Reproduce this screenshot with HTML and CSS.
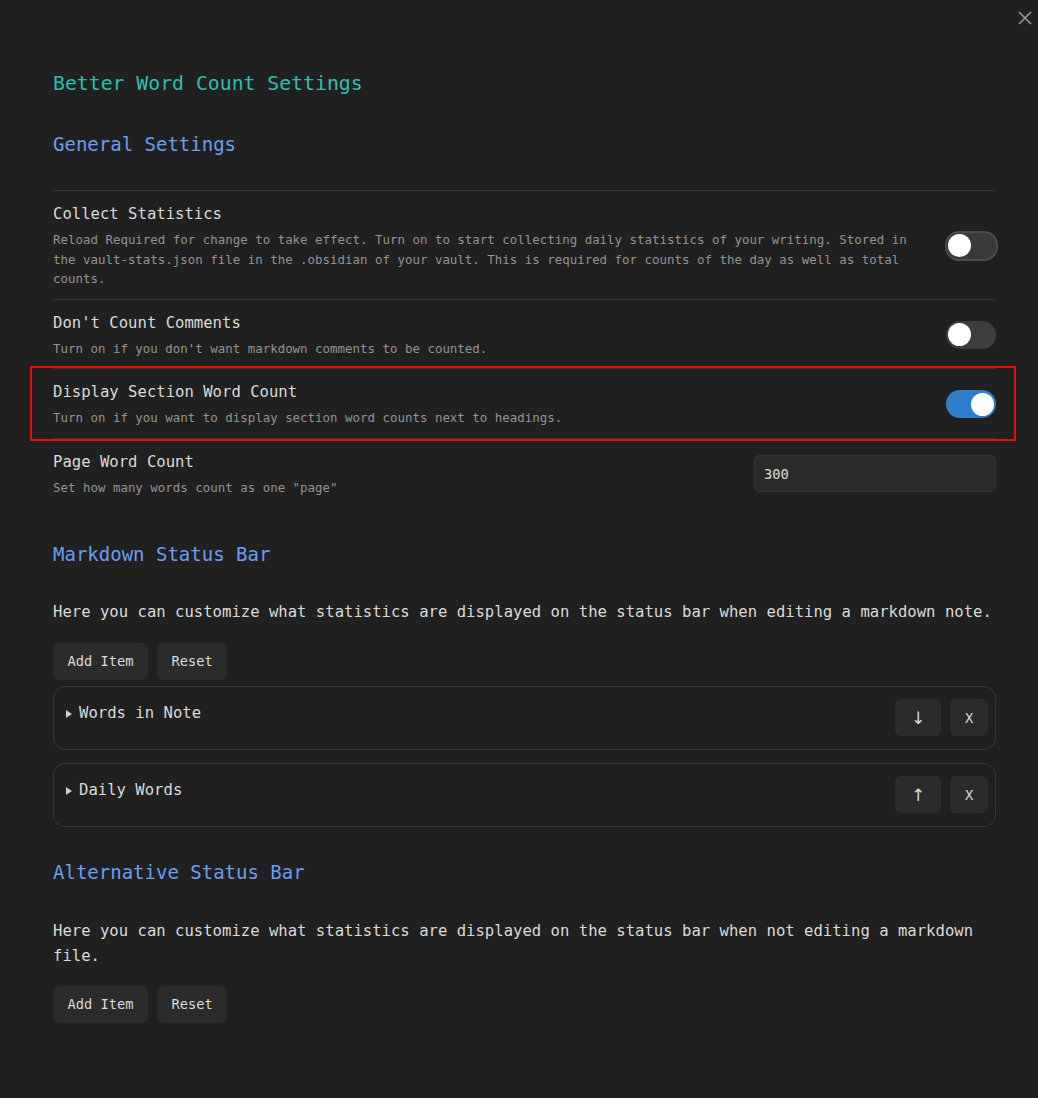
FILE: index.html
```html
<!DOCTYPE html>
<html>
<head>
<meta charset="utf-8">
<link rel="stylesheet" href="styles.css">
</head>
<body>
<div class="modal">
  <div class="close">
    <svg width="16" height="16" viewBox="0 0 16 16"><path d="M2 2 L14 14 M14 2 L2 14" stroke="#9a9a9a" stroke-width="1.6" fill="none"/></svg>
  </div>
  <div class="content">
    <h1 class="title">Better Word Count Settings</h1>
    <h2 class="heading first">General Settings</h2>

    <div class="setting">
      <div class="info">
        <div class="name">Collect Statistics</div>
        <div class="desc">Reload Required for change to take effect. Turn on to start collecting daily statistics of your writing. Stored in the vault-stats.json file in the .obsidian of your vault. This is required for counts of the day as well as total counts.</div>
      </div>
      <div class="toggle focused"><span class="knob"></span></div>
    </div>

    <div class="setting">
      <div class="info">
        <div class="name">Don't Count Comments</div>
        <div class="desc">Turn on if you don't want markdown comments to be counted.</div>
      </div>
      <div class="toggle"><span class="knob"></span></div>
    </div>

    <div class="setting highlighted">
      <div class="info">
        <div class="name">Display Section Word Count</div>
        <div class="desc">Turn on if you want to display section word counts next to headings.</div>
      </div>
      <div class="toggle on"><span class="knob"></span></div>
    </div>

    <div class="setting">
      <div class="info">
        <div class="name">Page Word Count</div>
        <div class="desc">Set how many words count as one "page"</div>
      </div>
      <input class="text-input" type="text" value="300">
    </div>

    <h2 class="heading">Markdown Status Bar</h2>
    <p class="para">Here you can customize what statistics are displayed on the status bar when editing a markdown note.</p>
    <div class="btn-row">
      <button class="btn">Add Item</button>
      <button class="btn">Reset</button>
    </div>
    <div class="item">
      <div class="summary"><span class="tri"></span>Words in Note</div>
      <div class="item-btns">
        <button class="btn small arrow">↓</button>
        <button class="btn small">X</button>
      </div>
    </div>
    <div class="item">
      <div class="summary"><span class="tri"></span>Daily Words</div>
      <div class="item-btns">
        <button class="btn small arrow">↑</button>
        <button class="btn small">X</button>
      </div>
    </div>

    <h2 class="heading alt">Alternative Status Bar</h2>
    <p class="para alt-para">Here you can customize what statistics are displayed on the status bar when not editing a markdown file.</p>
    <div class="btn-row last">
      <button class="btn">Add Item</button>
      <button class="btn">Reset</button>
    </div>
  </div>
</div>
</body>
</html>
```
FILE: styles.css
```css
html, body {
  margin: 0;
  padding: 0;
  background: #202020;
}
body {
  font-family: "DejaVu Sans Mono", "Liberation Mono", monospace;
  color: #dadada;
  width: 1038px;
  height: 1098px;
  overflow: hidden;
}
.modal {
  position: relative;
  height: 1098px;
}
.close {
  position: absolute;
  top: 10px;
  right: 5px;
  width: 16px;
  height: 16px;
}
.content {
  padding: 72px 42px 0 53px;
}
.title {
  margin: 0;
  font-size: 19.8px;
  line-height: 24px;
  font-weight: normal;
  color: #2fbdb3;
}
.heading {
  margin: 0;
  font-size: 19px;
  line-height: 24px;
  font-weight: normal;
  color: #6a9ef0;
}
.heading.first {
  margin-top: 36px;
  margin-bottom: 34px;
}
.setting {
  position: relative;
  display: flex;
  align-items: center;
  border-top: 1px solid #363636;
  padding: 12px 0 10px 0;
}
.info {
  flex: 1;
  margin-right: 20px;
}
.name {
  font-size: 15.6px;
  line-height: 22px;
}
.desc {
  font-size: 12.45px;
  line-height: 19.5px;
  color: #939393;
  margin-top: 5px;
}
.highlighted::after {
  content: "";
  position: absolute;
  top: -3px;
  left: -23px;
  right: -20px;
  bottom: -3px;
  border: 2px solid #e01010;
  pointer-events: none;
}
.toggle {
  position: relative;
  width: 50px;
  height: 28px;
  border-radius: 14px;
  background: #3d3d3d;
  flex: none;
}
.toggle .knob {
  position: absolute;
  top: 2.5px;
  left: 2px;
  width: 23px;
  height: 23px;
  border-radius: 50%;
  background: #ffffff;
}
.toggle.focused {
  width: 49px;
  height: 26px;
  border: 2px solid #4c4c4c;
  background: #3a3a3a;
  margin-right: -2px;
}
.toggle.focused .knob {
  top: 1.5px;
  left: 1px;
}
.toggle.on {
  background: #2f7dcb;
}
.toggle.on .knob {
  left: 25px;
}
.text-input {
  width: 242px;
  height: 37px;
  box-sizing: border-box;
  background: #2a2a2a;
  border: 1px solid #363636;
  border-radius: 5px;
  color: #dadada;
  font-family: "DejaVu Sans Mono", "Liberation Mono", monospace;
  font-size: 13.8px;
  padding: 0 9px;
  outline: none;
}
.heading:not(.first) {
  margin-top: 34.5px;
}
.heading.alt {
  margin-top: 33px;
}
.para {
  margin: 34px 0 0 0;
  font-size: 15.6px;
  line-height: 25px;
}
.para.alt-para {
  margin-top: 35px;
}
.btn-row {
  display: flex;
  gap: 9px;
  margin-top: 18px;
}
.btn-row.last {
  margin-top: 17px;
}
.btn {
  font-family: "DejaVu Sans Mono", "Liberation Mono", monospace;
  font-size: 13.7px;
  color: #dadada;
  background: #2b2b2b;
  border: none;
  border-radius: 6px;
  height: 37px;
  padding: 0 14.5px;
}
.item {
  display: flex;
  justify-content: space-between;
  align-items: center;
  box-sizing: border-box;
  height: 64px;
  border: 1px solid #363636;
  border-radius: 12px;
  margin-top: 6px;
  padding: 0 7px 0 12px;
}
.item + .item {
  margin-top: 13px;
}
.summary {
  align-self: flex-start;
  margin-top: 15px;
  font-size: 15.6px;
  line-height: 22px;
  display: flex;
  align-items: center;
}
.tri {
  width: 0;
  height: 0;
  border-left: 6px solid #cfcfcf;
  border-top: 4px solid transparent;
  border-bottom: 4px solid transparent;
  margin-right: 7px;
  margin-top: 2px;
}
.item-btns {
  display: flex;
  gap: 9px;
}
.btn.small {
  width: 38px;
  padding: 0;
  text-align: center;
}
.btn.small.arrow {
  width: 46px;
  font-family: "DejaVu Sans", sans-serif;
  font-size: 17px;
}
```
